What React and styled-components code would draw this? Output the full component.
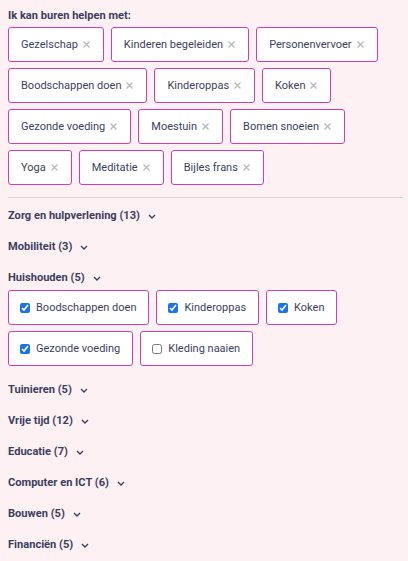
import React from 'react'
import styled, {createGlobalStyle} from 'styled-components'

const GlobalStyle = createGlobalStyle`
  html, body {
    margin: 0;
    background: #fef1f4;
  }
  body {
    font-family: Roboto, "Liberation Sans", sans-serif;
    color: #3b3f5e;
  }
`

const Page = styled.div`
  padding: 8px 5px 8px 8px;
`

const Heading = styled.div`
  font-size: 11.1px;
  font-weight: 700;
  line-height: 16px;
  margin-bottom: 3px;
`

const ChipWrap = styled.div`
  display: flex;
  flex-wrap: wrap;
  gap: 6px 7px;
  margin-bottom: ${props => props.bottom || 0}px;
`

const Chip = styled.div`
  display: flex;
  align-items: center;
  height: 35px;
  box-sizing: border-box;
  padding: ${props => (props.$check ? '0 12px 0 11px' : '0 13px 0 12px')};
  background: #fff;
  border: 1px solid #d63cae;
  border-radius: 3px;
  font-size: 11px;
  white-space: nowrap;
`

const Close = styled.svg`
  width: 7px;
  height: 7px;
  margin-left: 5px;
  stroke: #b8b8bd;
  stroke-width: 1.3;
`

const Box = styled.input`
  width: 10px;
  height: 10px;
  margin: 0 6px 0 0;
  accent-color: #1a73e8;
`

const Divider = styled.div`
  height: 1px;
  background: #d8d4d7;
  margin: 12px 0 3px;
`

const Category = styled.div`
  padding-bottom: 4px;
`

const CategoryHeader = styled.div`
  display: flex;
  align-items: center;
  font-size: 11.1px;
  font-weight: 700;
  line-height: 16px;
  padding: 7px 0 4px;
`

const Chevron = styled.svg`
  width: 8px;
  height: 5px;
  margin-left: 8px;
  stroke: #3b3f5e;
  stroke-width: 1.4;
  fill: none;
`

const selected = [
  'Gezelschap', 'Kinderen begeleiden', 'Personenvervoer', 'Boodschappen doen',
  'Kinderoppas', 'Koken', 'Gezonde voeding', 'Moestuin', 'Bomen snoeien',
  'Yoga', 'Meditatie', 'Bijles frans',
]

const categories = [
  {name: 'Zorg en hulpverlening', count: 13},
  {name: 'Mobiliteit', count: 3},
  {
    name: 'Huishouden',
    count: 5,
    items: [
      {label: 'Boodschappen doen', checked: true},
      {label: 'Kinderoppas', checked: true},
      {label: 'Koken', checked: true},
      {label: 'Gezonde voeding', checked: true},
      {label: 'Kleding naaien', checked: false},
    ],
  },
  {name: 'Tuinieren', count: 5},
  {name: 'Vrije tijd', count: 12},
  {name: 'Educatie', count: 7},
  {name: 'Computer en ICT', count: 6},
  {name: 'Bouwen', count: 5},
  {name: 'Financiën', count: 5},
]

function App() {
  return (
    <Page>
      <GlobalStyle />
      <Heading>Ik kan buren helpen met:</Heading>
      <ChipWrap>
        {selected.map(tag => (
          <Chip key={tag}>
            {tag}
            <Close viewBox="0 0 7 7">
              <path d="M0.5 0.5L6.5 6.5M6.5 0.5L0.5 6.5" />
            </Close>
          </Chip>
        ))}
      </ChipWrap>
      <Divider />
      {categories.map(cat => (
        <Category key={cat.name}>
          <CategoryHeader>
            {cat.name} ({cat.count})
            <Chevron viewBox="0 0 8 5">
              <path d="M1 1L4 4L7 1" />
            </Chevron>
          </CategoryHeader>
          {cat.items && (
            <ChipWrap bottom={5}>
              {cat.items.map(item => (
                <Chip key={item.label} $check>
                  <Box type="checkbox" defaultChecked={item.checked} />
                  {item.label}
                </Chip>
              ))}
            </ChipWrap>
          )}
        </Category>
      ))}
    </Page>
  )
}

export default App
